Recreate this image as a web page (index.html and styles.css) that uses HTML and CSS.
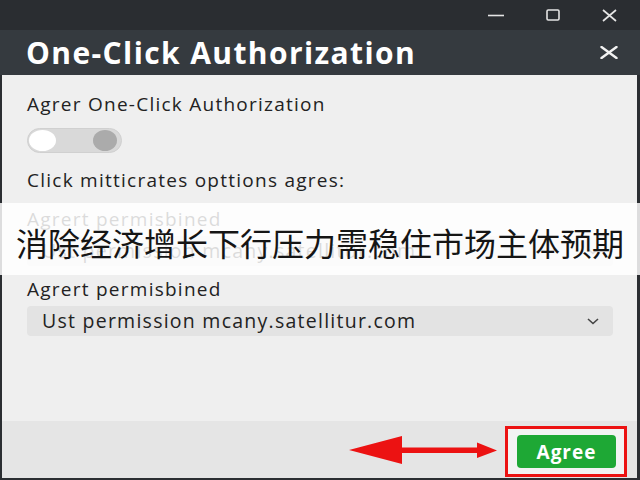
FILE: index.html
```html
<!DOCTYPE html>
<html lang="en">
<head>
<meta charset="utf-8">
<title>One-Click Authorization</title>
<link rel="stylesheet" href="styles.css">
</head>
<body>
<div class="window">
  <header class="topbar">
    <span class="ctrl"><svg width="16" height="12" viewBox="0 0 16 12"><path d="M0 6.5h16" stroke="#e4e4e4" stroke-width="1.6"/></svg></span>
    <span class="ctrl"><svg width="14" height="12" viewBox="0 0 14 12"><rect x="1" y="1" width="12" height="10" rx="1.2" fill="none" stroke="#e4e4e4" stroke-width="1.6"/></svg></span>
    <span class="ctrl"><svg width="15" height="13" viewBox="0 0 15 13"><path d="M1 1l13 11M14 1L1 12" stroke="#e4e4e4" stroke-width="1.7"/></svg></span>
  </header>
  <div class="titlebar">
    <h1 class="title">One-Click Authorization</h1>
    <svg class="title-close" width="18" height="13" viewBox="0 0 18 13"><path d="M1.5 1l15 11M16.5 1l-15 11" stroke="#f2f2f2" stroke-width="2.4" stroke-linecap="round"/></svg>
  </div>
  <main class="content">
    <p class="label first">Agrer One-Click Authorization</p>
    <div class="toggle"><span class="knob on"></span><span class="knob off"></span></div>
    <p class="label second">Click mitticrates opttions agres:</p>
    <div class="field field-a">
      <p class="label">Agrert permisbined</p>
      <div class="select"><span>Ust permission mcany.satellitur.com</span><svg width="12" height="7" viewBox="0 0 12 7"><path d="M1 1l5 4.5L11 1" fill="none" stroke="#444" stroke-width="1.6"/></svg></div>
    </div>
    <div class="field field-b">
      <p class="label">Agrert permisbined</p>
      <div class="select"><span>Ust permission mcany.satellitur.com</span><svg width="12" height="7" viewBox="0 0 12 7"><path d="M1 1l5 4.5L11 1" fill="none" stroke="#444" stroke-width="1.6"/></svg></div>
    </div>
  </main>
  <footer class="footer">
    <svg class="arrow" width="148" height="28" viewBox="0 0 148 28"><path d="M0 14L53 0V11.5H128V6.5L148 14.5L128 22V17H53V28Z" fill="#ec1212"/></svg>
    <div class="highlight"><button class="agree">Agree</button></div>
  </footer>
  <div class="subtitle">消除经济增长下行压力需稳住市场主体预期</div>
</div>
</body>
</html>
```
FILE: styles.css
```css
html, body {
  margin: 0;
  padding: 0;
}
body {
  width: 640px;
  height: 480px;
  overflow: hidden;
  background: #2b2e32;
  font-family: "Open Sans", "Liberation Sans", sans-serif;
}
.window {
  position: relative;
  display: flex;
  flex-direction: column;
  height: 480px;
}
.topbar {
  height: 30px;
  flex: none;
  display: flex;
  justify-content: flex-end;
  background: #2a2d31;
  padding-right: 2px;
}
.ctrl {
  width: 57px;
  display: flex;
  align-items: center;
  justify-content: center;
}
.titlebar {
  height: 45px;
  flex: none;
  display: flex;
  align-items: center;
  justify-content: space-between;
  background: #353a3f;
  padding: 0 22px 0 26px;
}
.title {
  margin: 0;
  font-size: 30px;
  font-weight: 700;
  letter-spacing: 1.4px;
  line-height: 45px;
  color: #ffffff;
}
.content {
  flex: 1;
  background: #efefef;
  border-left: 2px solid #2b2e32;
  border-right: 3px solid #2b2e32;
  padding: 18px 24px 0 25px;
}
.label {
  margin: 0;
  font-size: 19px;
  letter-spacing: 1.25px;
  line-height: 22px;
  color: #222222;
}
.toggle {
  margin-top: 13px;
  width: 95px;
  height: 25px;
  box-sizing: border-box;
  border-radius: 13px;
  background: #d9d9d9;
  border: 1px solid #d0d0d0;
  display: flex;
  align-items: center;
  justify-content: space-between;
  padding: 0 4px 0 1px;
}
.knob {
  width: 27px;
  height: 21px;
  border-radius: 50%;
}
.knob.on {
  background: #ffffff;
}
.knob.off {
  width: 24px;
  background: #ababab;
}
.label.second {
  margin-top: 16px;
}
.field-a {
  margin-top: 17px;
}
.field-b {
  margin-top: 12px;
}
.select {
  margin-top: 6px;
  height: 30px;
  border-radius: 4px;
  background: #e3e3e3;
  display: flex;
  align-items: center;
  justify-content: space-between;
  padding: 0 14px 0 15px;
  font-size: 19.5px;
  letter-spacing: 1.25px;
  line-height: 30px;
  color: #222222;
}
.footer {
  flex: none;
  height: 59px;
  box-sizing: border-box;
  background: #e5e5e5;
  border-style: solid;
  border-color: #2b2e32;
  border-width: 0 3px 2px 2px;
  display: flex;
  justify-content: flex-end;
  align-items: flex-start;
  padding: 5px 10px 0 0;
  gap: 8px;
}
.arrow {
  align-self: center;
  margin-bottom: 4px;
}
.highlight {
  width: 122px;
  height: 51px;
  box-sizing: border-box;
  border: 3px solid #ec1212;
  background: #f3f3f3;
  padding: 6px 8px 6px 9px;
}
.agree {
  width: 100%;
  height: 33px;
  border: none;
  border-radius: 4px;
  background: #1ea835;
  color: #ffffff;
  font-family: "Open Sans", "Liberation Sans", sans-serif;
  font-size: 19px;
  font-weight: 700;
  letter-spacing: 1px;
  padding: 0;
}
.subtitle {
  position: absolute;
  left: 0;
  right: 0;
  top: 203px;
  height: 72px;
  background: rgba(255, 255, 255, 0.84);
  display: flex;
  align-items: center;
  justify-content: center;
  padding-top: 6px;
  box-sizing: border-box;
  font-family: "Noto Sans CJK SC", sans-serif;
  font-size: 32px;
  letter-spacing: 0;
  color: #151515;
  white-space: nowrap;
}
```
